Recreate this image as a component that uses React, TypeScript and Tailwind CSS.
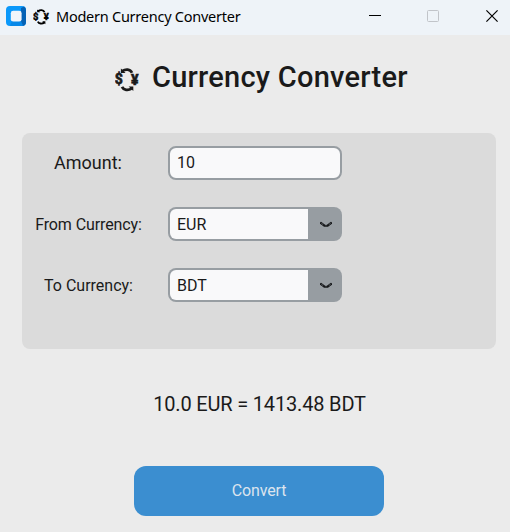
import { useState } from "react";

function ExchangeIcon({ className }: { className: string }) {
  return (
    <svg viewBox="0 0 25 24" className={className} aria-hidden="true">
      <g fontSize="14" fontWeight="800" fontFamily="Roboto, sans-serif" fill="currentColor" stroke="currentColor" strokeWidth=".6">
        <text x="-0.2" y="16">$</text>
        <text x="15.9" y="16.8">¥</text>
      </g>
      <g fill="none" stroke="currentColor" strokeWidth="2.8">
        <path d="M7.2 3.2C10.4 .9 15.2 .8 17 4.8" />
        <path d="M7 18.8C8.6 22.2 13.2 22.8 16.8 20.4" />
      </g>
      <path d="M5.9 .6V5H10.6Z" fill="currentColor" />
      <path d="M18.3 22.9V18.4H13.6Z" fill="currentColor" />
    </svg>
  );
}

function AppLogo() {
  return (
    <svg viewBox="0 0 20 20" className="h-5 w-5" aria-hidden="true">
      <rect width="20" height="20" rx="4" fill="#0a98fa" />
      <path d="M15 2L18 .6Q20 1.8 20 4V16Q20 20 16 20H13L15 15Z" fill="#0562b5" />
      <path d="M4 19.6L6 15H15L17 19.6L16 20H5Z" fill="#0788e8" />
      <rect x="4.8" y="4.8" width="10.8" height="10.8" rx="2.4" fill="#f2f5fa" />
    </svg>
  );
}

function TitleBar() {
  return (
    <header className="flex h-[35px] items-center bg-[#eef3f8] pb-[3px] pl-1.5 text-black">
      <AppLogo />
      <ExchangeIcon className="mt-0.5 ml-[7px] h-4 w-[17px]" />
      <span className="mt-0.5 ml-1.5 font-['Noto_Sans',sans-serif] text-[14.5px] tracking-[-0.25px] whitespace-nowrap">
        Modern Currency Converter
      </span>
      <div className="mr-3 ml-auto flex items-center">
        <svg className="h-3 w-3" viewBox="0 0 12 12"><path d="M0 5.5H12" stroke="#000" /></svg>
        <svg className="ml-[46px] h-3 w-3" viewBox="0 0 12 12"><rect x=".5" y=".5" width="11" height="11" rx="1" fill="none" stroke="#c1c4c9" /></svg>
        <svg className="ml-[47px] h-3 w-3" viewBox="0 0 12 12"><path d="M.4.4L11.6 11.6M11.6.4L.4 11.6" stroke="#000" strokeWidth="1.2" /></svg>
      </div>
    </header>
  );
}

function CurrencyBox({ value }: { value: string }) {
  return (
    <button className="flex h-[34px] w-[174px] overflow-hidden rounded-lg bg-[#979da2] p-0.5 text-left text-base">
      <span className="flex h-full w-[138px] items-center rounded-l-md bg-[#f9f9fa] pt-0.5 pl-[7px]">{value}</span>
      <span className="flex h-full flex-1 items-center pl-3">
        <svg className="mt-0.5 h-2 w-3" viewBox="0 0 12 8" aria-hidden="true">
          <path d="M1.1 2.1L4.4 4.6H7.6L10.9 2.1" fill="none" stroke="#151719" strokeWidth="2.4" strokeLinecap="round" strokeLinejoin="round" />
          <path d="M1.4 2.3L3.2 3.6M10.6 2.3L8.8 3.6" stroke="#70767b" strokeWidth=".8" />
          <path d="M4.8 3.2H7.2L6.6 4.3H5.4Z" fill="#979da2" />
        </svg>
      </span>
    </button>
  );
}

export default function App() {
  const [amount, setAmount] = useState("10");
  return (
    <div className="flex h-[532px] w-[510px] flex-col overflow-hidden bg-[#ebebeb] font-[Roboto,sans-serif] text-[#1a1a1a]">
      <TitleBar />
      <h1 className="mt-[25px] flex h-9 items-center pl-[115px] text-[29px] font-medium whitespace-nowrap">
        <ExchangeIcon className="mt-1 h-6 w-[25px]" />
        <span className="ml-3 tracking-[0.25px]">Currency Converter</span>
      </h1>
      <section className="mt-[37px] ml-[22px] h-[216px] w-[474px] rounded-lg bg-[#dbdbdb] pt-[13px]">
        <div className="grid grid-cols-[133px_174px] gap-x-[13px] gap-y-[27px]">
          <label className="self-center pr-px text-center text-lg" htmlFor="amount">Amount:</label>
          <input id="amount" value={amount} onChange={(e) => setAmount(e.target.value)} className="h-[34px] w-[174px] rounded-lg border-2 border-[#979da2] bg-[#f9f9fa] px-[7px] pb-px text-base outline-none" />
          <span className="self-center pt-0.5 text-center text-base tracking-[-0.1px]">From Currency:</span>
          <CurrencyBox value="EUR" />
          <span className="self-center pt-0.5 text-center text-base">To Currency:</span>
          <CurrencyBox value="BDT" />
        </div>
      </section>
      <p className="mt-[41px] h-7 pl-[9px] text-center text-[20px] leading-7 tracking-[-0.17px]">10.0 EUR = 1413.48 BDT</p>
      <button className="mt-12 ml-[134px] h-[50px] w-[250px] rounded-xl bg-[#3b8ed0] text-base tracking-[-0.15px] text-[#dce4ee]">Convert</button>
    </div>
  );
}
